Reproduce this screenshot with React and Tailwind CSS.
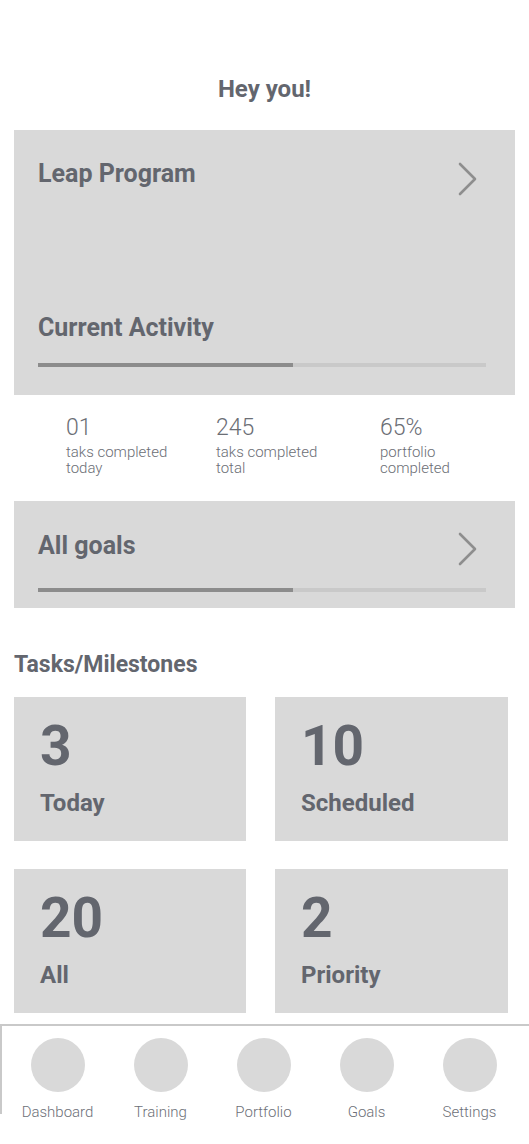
import React from 'react';

const stats = [
    { value: '01', label: ['taks completed', 'today'], width: 'w-[150px]' },
    { value: '245', label: ['taks completed', 'total'], width: 'w-[164px]' },
    { value: '65%', label: ['portfolio', 'completed'], width: 'w-[120px]' },
];

const tiles = [
    { count: '3', label: 'Today' },
    { count: '10', label: 'Scheduled' },
    { count: '20', label: 'All' },
    { count: '2', label: 'Priority' },
];

const navItems = ['Dashboard', 'Training', 'Portfolio', 'Goals', 'Settings'];

const Chevron = ({ className }) => (
    <svg
        className={className}
        width="22"
        height="34"
        viewBox="0 0 22 34"
        fill="none"
    >
        <path
            d="M3 2 L18 17 L3 32"
            stroke="#8e8e8e"
            strokeWidth="2.6"
            strokeLinecap="round"
            strokeLinejoin="round"
        />
    </svg>
);

const ProgressBar = ({ className }) => (
    <div className={`h-[4px] w-[448px] bg-[#c9c9c9] ${className}`}>
        <div className="h-full w-[255px] bg-[#8c8c8c]" />
    </div>
);

const App = () => {
    return (
        <div className="w-[529px] min-h-[1144px] bg-white font-['Roboto','Liberation_Sans',sans-serif] text-[#63666e] overflow-hidden">
            {/* greeting */}
            <h1 className="pt-[74px] text-center text-[24px] font-bold leading-[30px]">
                Hey you!
            </h1>

            {/* program card */}
            <div className="mt-[26px] mx-[14px] h-[265px] bg-[#d9d9d9] pl-[24px] pt-[29px]">
                <div className="flex items-start justify-between pr-[36px]">
                    <div className="text-[25px] font-bold leading-[30px]">
                        Leap Program
                    </div>
                    <Chevron className="mt-[3px]" />
                </div>
                <div className="mt-[117px] text-[25px] font-bold leading-[30px]">
                    Current Activity
                </div>
                <ProgressBar className="mt-[20px]" />
            </div>

            {/* stats */}
            <div className="mt-[21px] ml-[66px] flex">
                {stats.map((stat) => (
                    <div key={stat.value} className={stat.width}>
                        <div className="text-[23px] font-light leading-[24px] text-[#6b6e75]">
                            {stat.value}
                        </div>
                        <div className="mt-[4px] text-[15px] font-light leading-[16px] text-[#6b6e75]">
                            {stat.label[0]}
                            <br />
                            {stat.label[1]}
                        </div>
                    </div>
                ))}
            </div>

            {/* goals card */}
            <div className="mt-[25px] mx-[14px] h-[107px] bg-[#d9d9d9] pl-[24px] pt-[30px]">
                <div className="flex items-start justify-between pr-[36px]">
                    <div className="text-[25px] font-bold leading-[30px]">
                        All goals
                    </div>
                    <Chevron className="mt-[1px]" />
                </div>
                <ProgressBar className="mt-[22px]" />
            </div>

            {/* tasks */}
            <h2 className="mt-[42px] ml-[14px] text-[23px] font-bold leading-[30px]">
                Tasks/Milestones
            </h2>
            <div className="mt-[17px] ml-[14px] grid grid-cols-[232px_233px] gap-x-[29px] gap-y-[28px]">
                {tiles.map((tile) => (
                    <div
                        key={tile.label}
                        className="h-[144px] bg-[#d9d9d9] pl-[26px] pt-[22px]"
                    >
                        <div className="text-[55px] font-bold leading-[54px]">
                            {tile.count}
                        </div>
                        <div className="mt-[16px] text-[24px] font-bold leading-[28px]">
                            {tile.label}
                        </div>
                    </div>
                ))}
            </div>

            {/* bottom nav */}
            <nav className="mt-[11px] h-[90px] border-t-2 border-l-2 border-[#c9c9c9]">
                <div className="ml-[4px] w-[515px] grid grid-cols-5 pt-[12px]">
                    {navItems.map((item) => (
                        <div key={item} className="flex flex-col items-center">
                            <div className="h-[54px] w-[54px] rounded-full bg-[#d9d9d9]" />
                            <div className="mt-[11px] text-[15px] font-light leading-[18px] text-[#6d7078]">
                                {item}
                            </div>
                        </div>
                    ))}
                </div>
            </nav>
        </div>
    );
};

export default App;
